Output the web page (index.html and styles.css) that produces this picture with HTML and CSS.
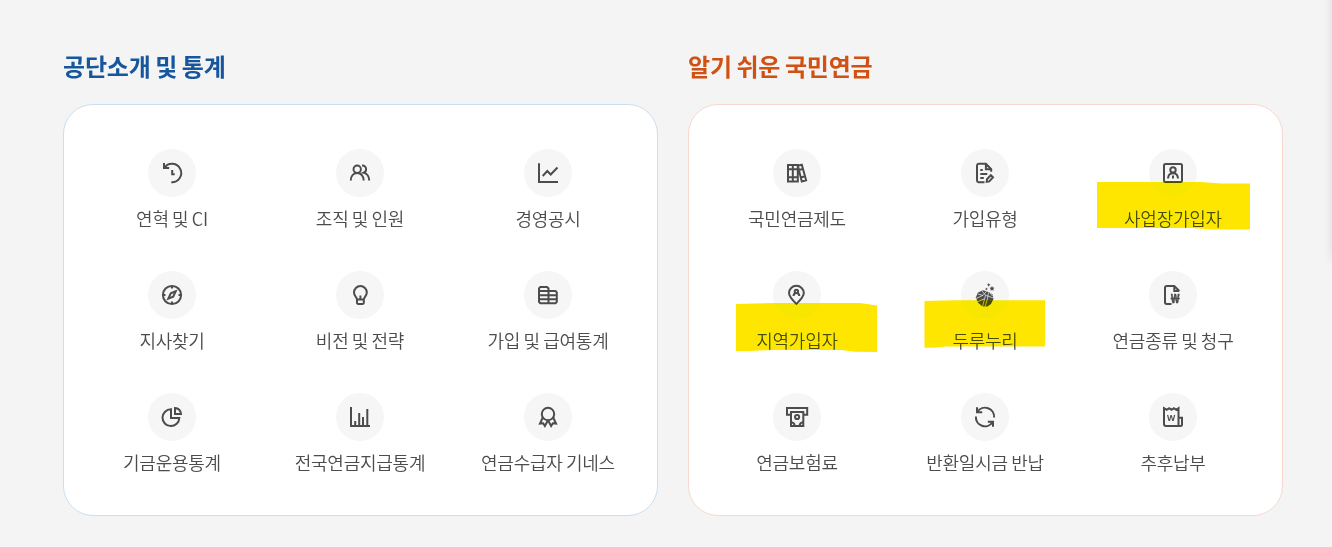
FILE: index.html
```html
<!doctype html>
<html lang="ko">
<head>
    <meta charset="utf-8" />
    <meta name="viewport" content="width=device-width, initial-scale=1" />
    <title>국민연금</title>
    <link rel="stylesheet" href="styles.css">
</head>
<body>
    <div class="container">
        <!-- About -->
        <section class="group about">
            <h2>공단소개 및 통계</h2>
            <ul class="menu">
                <li class="item">
                    <span class="icon"><svg viewBox="0 0 24 24"><path d="M4 2v5h5.200M4.500 6.700A9.200 9.200 0 1 1 11.300 21.200M12.200 9v4.200h2.500"/></svg></span>
                    <span class="label">연혁 및 CI</span>
                </li>
                <li class="item">
                    <span class="icon"><svg viewBox="0 0 24 24"><circle cx="9.200" cy="8.200" r="3.700"/><path d="M2.800 19.500c0-4.300 2.600-7.500 6.400-7.500s6.500 3.200 6.500 7.500M14 4.600c2.400-.2 4.100 1.400 4.100 3.600 0 1.600-.9 2.900-2.300 3.500 3 .6 5.400 3.800 5.400 7.800"/></svg></span>
                    <span class="label">조직 및 인원</span>
                </li>
                <li class="item">
                    <span class="icon"><svg viewBox="0 0 24 24"><path d="M3 2.300v18.700h19M6.700 15l4.600-5 3.400 3.500 6.800-7"/></svg></span>
                    <span class="label">경영공시</span>
                </li>
                <li class="item">
                    <span class="icon"><svg viewBox="0 0 24 24"><circle cx="12" cy="12" r="9.100"/><path d="M12 3v2.500M12 18.500v2.500M3 12h2.500M18.500 12h2.500M15.700 8.300l-4.900 2-2.500 5.400 4.900-2z"/></svg></span>
                    <span class="label">지사찾기</span>
                </li>
                <li class="item">
                    <span class="icon"><svg viewBox="0 0 24 24"><path d="M9 16.500c0-2.200-3-3.300-3-7a6.400 6.400 0 0 1 12.800 0c0 3.700-3 4.800-3 7M9 16.500h6.800v3.300a1.200 1.200 0 0 1-1.200 1.200h-4.400a1.200 1.200 0 0 1-1.200-1.200zM12.400 12.500v4"/></svg></span>
                    <span class="label">비전 및 전략</span>
                </li>
                <li class="item">
                    <span class="icon"><svg viewBox="0 0 24 24"><path d="M4.300 4h6.700l1.500 1.500v14.700H4.300L3 18.800V5.300zM3 8.100h16.500l1.300 1.300v9.400l-1.300 1.400h-7.300M3 12.200h17.800M3 16.200h17.800"/></svg></span>
                    <span class="label">가입 및 급여통계</span>
                </li>
                <li class="item">
                    <span class="icon"><svg viewBox="0 0 24 24"><path d="M11 4.300a8.400 8.400 0 1 0 8.300 8.700H11zM15 3v6.100h6A6.100 6.100 0 0 0 15 3z"/></svg></span>
                    <span class="label">기금운용통계</span>
                </li>
                <li class="item">
                    <span class="icon"><svg viewBox="0 0 24 24"><path d="M3 2v19h19M7.200 16v5M11.200 8v13M15 12v9M19.300 4v17"/></svg></span>
                    <span class="label">전국연금지급통계</span>
                </li>
                <li class="item">
                    <span class="icon"><svg viewBox="0 0 24 24"><circle cx="12" cy="9" r="6.200"/><path d="M6.800 12.500l-2.800 6 3.200-.3 1.700 2.800 3.100-5.700M17.200 12.500l2.800 6-3.200-.3-1.700 2.800-3.100-5.700"/></svg></span>
                    <span class="label">연금수급자 기네스</span>
                </li>
            </ul>
        </section>

        <!-- Guide -->
        <section class="group guide">
            <h2>알기 쉬운 국민연금</h2>
            <ul class="menu">
                <li class="item">
                    <span class="icon"><svg viewBox="0 0 24 24"><path d="M3 4h9.800v16.500H3zM7.800 4v16.500M3 8.300h9.800M3 16.200h9.800M12.800 4.700l4-.9 4.300 15.500-4.300 1.200zM13.900 9l4-1M15.800 16.500l4-1.100"/></svg></span>
                    <span class="label">국민연금제도</span>
                </li>
                <li class="item">
                    <span class="icon"><svg viewBox="0 0 24 24"><path d="M11.500 21.200H5.700A1.800 1.800 0 0 1 4 19.500V4.500A1.800 1.800 0 0 1 5.700 2.800h7.200l5.300 5.400v2.600M12.900 3v5.200h5.300M7.300 9h2.500M7.300 13h7M7.300 17h3.500M13.700 20.800l.3-2.600 3.800-4 2.200 2.200-3.700 4z"/></svg></span>
                    <span class="label">가입유형</span>
                </li>
                <li class="item">
                    <span class="icon"><svg viewBox="0 0 24 24"><rect x="3" y="3" width="18" height="18" rx="1.500"/><circle cx="12" cy="8.900" r="2.700"/><path d="M7 17.500c.2-3.100 1.800-5.200 5-5.200s4.800 2.100 5 5.200M12 14.500v3"/></svg></span>
                    <span class="label">사업장가입자</span>
                    <svg class="marker workplace" viewBox="0 0 153 48"><path d="M0 0h104l20 1.500h29V47.500h-38L94 46H0z"/></svg>
                </li>
                <li class="item">
                    <span class="icon"><svg viewBox="0 0 24 24"><path d="M11.400 20.900C7.500 17 4 13.800 4 10a7.400 7.200 0 0 1 14.800 0c0 3.800-3.500 7-7.400 10.900z"/><circle cx="11.400" cy="8.400" r="1.700"/><path d="M8.500 13c.1-1.800 1.300-2.900 2.900-2.900s2.800 1.100 2.900 2.900"/></svg></span>
                    <span class="label">지역가입자</span>
                    <svg class="marker local" viewBox="0 0 142 49"><path d="M0 1L40 0h84l17 2.500V49l-22-.3-14-1.700H35L14 48H0z"/></svg>
                </li>
                <li class="item">
                    <span class="icon"><svg viewBox="0 0 24 24">
                        <path class="solid" d="M5 9.500l5-2.300 5 1.600 4.500 2.500 1 4.700-2.500 5-3.500 2.500H9.500L5 19.800 2.800 14.500z"/>
                        <path class="cut" d="M3 15.500l7-3.200 4-4.500M9 8l3.500 4.300-3 11.500M12.500 12.300l8 2.700M15.500 9.500l-1 6-2.500 8.300M5 11l5 1.500M17 10l2.500 3M4 19l7-3"/>
                        <path class="solid" d="M15.700 0l.6 1.300 1.300.5-1.300.6-.6 1.300-.6-1.300-1.300-.6 1.300-.5zM13.500 4.500l.5 1 1 .5-1 .5-.5 1-.5-1-1-.5 1-.5zM19 3l.8 1.500 1.700.3-1.200 1.200.2 1.800-1.500-.8-1.600.8.3-1.800-1.200-1.200 1.700-.3z"/>
                    </svg></span>
                    <span class="label">두루누리</span>
                    <svg class="marker duru" viewBox="0 0 121 48"><path d="M.5 1l30-.7L121 .3V46.500H22L10 47.700H.5z"/></svg>
                </li>
                <li class="item">
                    <span class="icon"><svg viewBox="0 0 24 24"><path d="M10.500 21H5.700A1.700 1.700 0 0 1 4 19.300V4.700A1.700 1.700 0 0 1 5.700 3h7.600l5 5M13.300 3v5h5"/><text class="won" x="9.800" y="19.500" font-size="12">₩</text></svg></span>
                    <span class="label">연금종류 및 청구</span>
                </li>
                <li class="item">
                    <span class="icon"><svg viewBox="0 0 24 24"><path d="M5.500 9.700H2V3h20.200v6.700h-3.500M6 7h12.300v14H6zM6 17.200a4 4 0 0 1 3.700 3.800M18.300 17.200a4 4 0 0 0-3.700 3.800"/><circle cx="12.100" cy="12" r="2.100"/></svg></span>
                    <span class="label">연금보험료</span>
                </li>
                <li class="item">
                    <span class="icon"><svg viewBox="0 0 24 24"><path d="M4 2.300v5h5.200M4.500 6.700A9.100 9.100 0 0 1 21.100 12.500M20 21.700v-5h-5.200M19.500 17.300A9.100 9.100 0 0 1 2.900 11.500"/></svg></span>
                    <span class="label">반환일시금 반납</span>
                </li>
                <li class="item">
                    <span class="icon"><svg viewBox="0 0 24 24"><path d="M3 3.200l2.800 1.600 2.400-1.600 2.300 1.600 2.400-1.600 2.300 1.600 2.300-1.600V21H5a2 2 0 0 1-2-2zM17.500 12.700H21V19.500a1.500 1.500 0 0 1-1.500 1.500h-2"/><text x="6" y="15.700" font-size="8.500">W</text></svg></span>
                    <span class="label">추후납부</span>
                </li>
            </ul>
        </section>
    </div>
    <div class="side-panel"></div>
</body>
</html>
```

FILE: styles.css
```css
* {
    box-sizing: border-box;
}
body {
    font-family: 'Noto Sans CJK KR', sans-serif;
    margin: 0;
    background: #f4f4f4;
    color: #4c4c4c;
}
.container {
    display: grid;
    grid-template-columns: 595px 595px;
    gap: 30px;
    height: 547px;
    padding: 48px 0 0 63px;
    overflow: hidden;
}
.group h2 {
    margin: 0 0 20px;
    font-size: 24px;
    line-height: 36px;
    font-weight: 700;
    letter-spacing: -0.2px;
    word-spacing: -1.8px;
}
.about h2 {
    color: #16569c;
}
.guide h2 {
    color: #cf5214;
}
.menu {
    display: grid;
    grid-template-columns: repeat(3, 188px);
    grid-auto-rows: 84px;
    row-gap: 38px;
    height: 412px;
    margin: 0;
    padding: 44px 14px 0;
    list-style: none;
    background: white;
    border: 1px solid #c9dff2;
    border-radius: 30px;
}
.guide .menu {
    border-color: #f8d8cd;
}
.item {
    position: relative;
    display: flex;
    flex-direction: column;
    align-items: center;
    gap: 7px;
}
.icon {
    display: flex;
    align-items: center;
    justify-content: center;
    width: 48px;
    height: 48px;
    background: #f6f6f6;
    border-radius: 50%;
}
.icon svg {
    width: 24px;
    height: 24px;
    fill: none;
    stroke: #4c4c4c;
    stroke-width: 2;
}
.icon text {
    font-family: 'Noto Sans', sans-serif;
    font-weight: 700;
    fill: #4c4c4c;
    stroke: none;
}
.icon .won {
    stroke: #4c4c4c;
    stroke-width: 0.4;
}
.icon .solid {
    fill: #4c4c4c;
    stroke: none;
}
.icon .cut {
    stroke: #f6f6f6;
    stroke-width: 0.7;
}
.label {
    font-size: 18px;
    line-height: 28px;
    font-weight: 350;
    letter-spacing: -0.25px;
    word-spacing: -1.4px;
    white-space: nowrap;
}

/* highlighter strokes */
.marker {
    position: absolute;
    fill: #ffe600;
    mix-blend-mode: darken;
}
.workplace {
    left: 18px;
    top: 33px;
    width: 153px;
    height: 48px;
}
.local {
    left: 33px;
    top: 32px;
    width: 142px;
    height: 49px;
}
.duru {
    left: 33px;
    top: 29px;
    width: 121px;
    height: 48px;
}

/* panel parked past the right edge, only its shadow shows */
.side-panel {
    position: fixed;
    left: 100%;
    top: -20px;
    width: 60px;
    height: 280px;
    box-shadow: 0 0 10px rgba(0,0,0,0.1);
}
```
